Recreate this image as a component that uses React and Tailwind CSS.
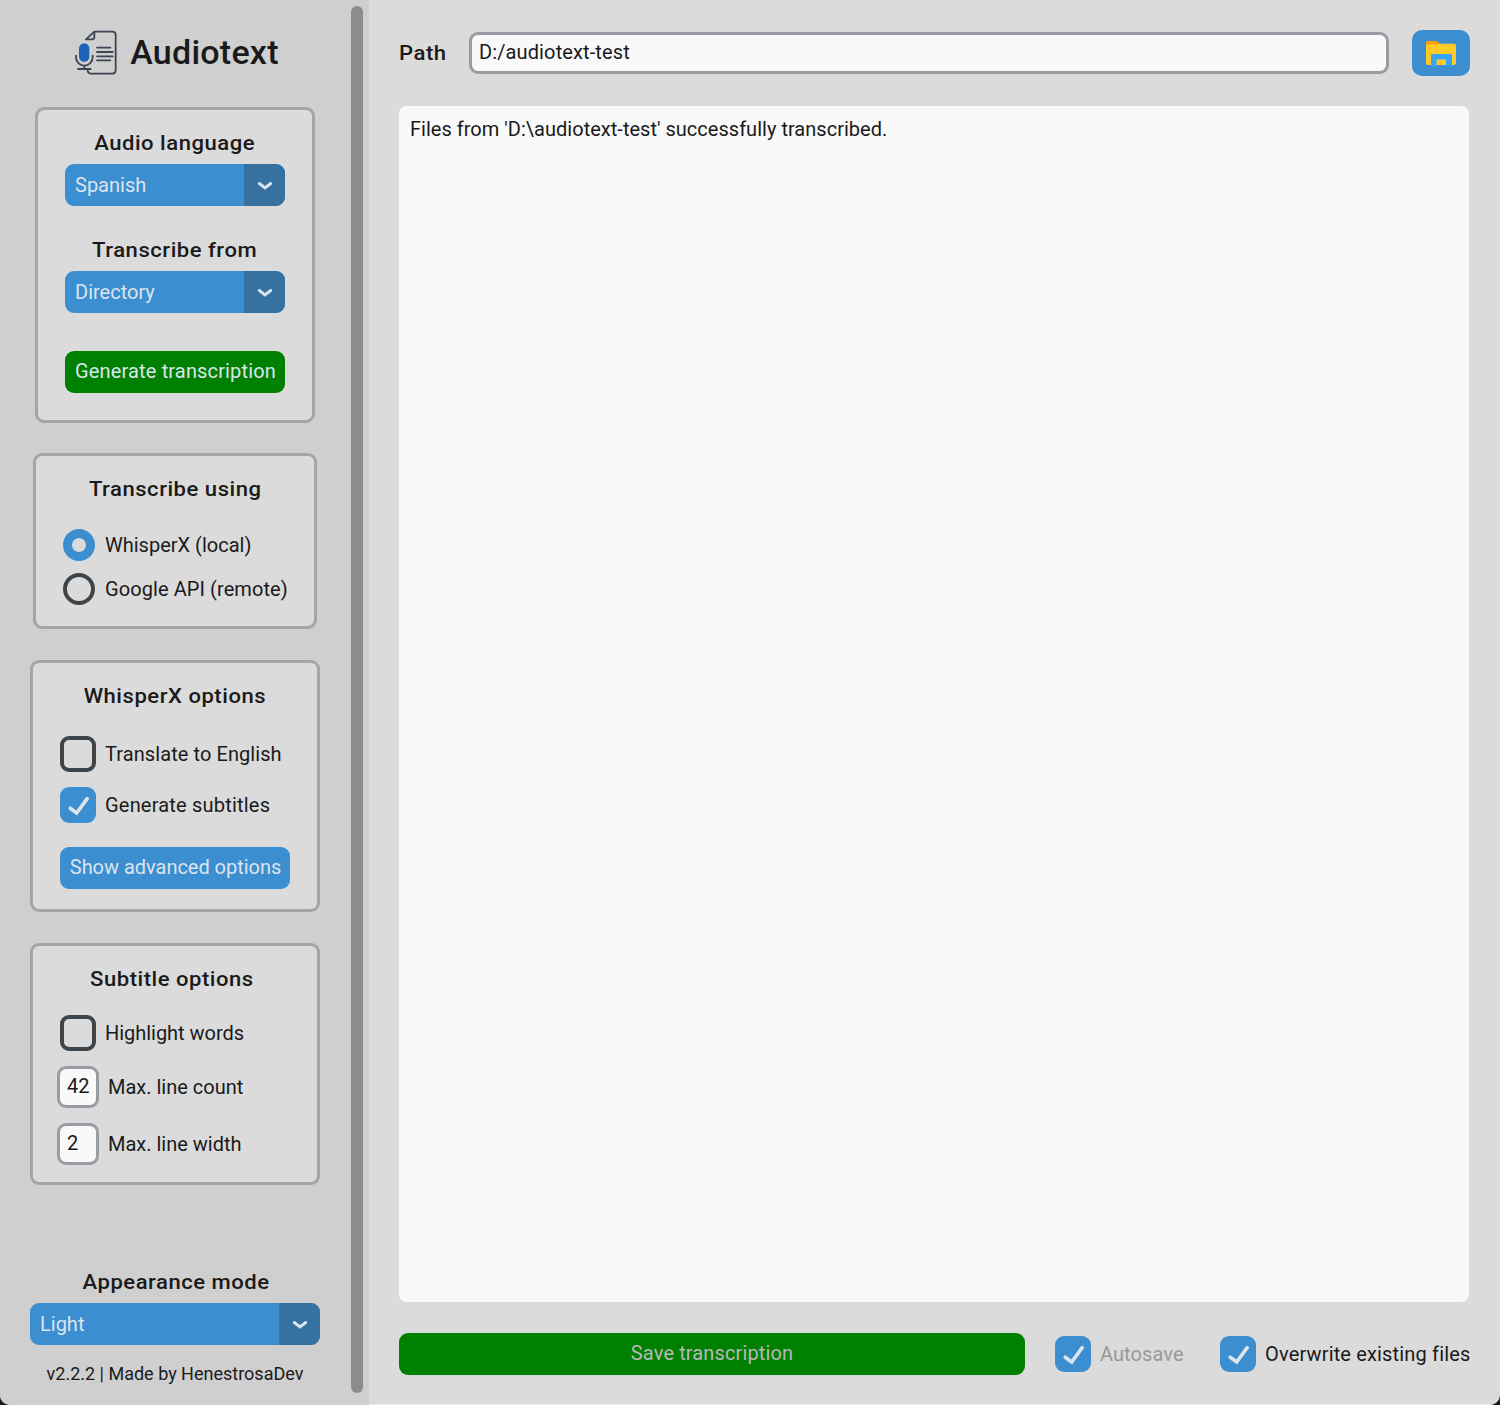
import React from "react";

function Title({ children, className = "" }) {
  return (
    <div className={`flex items-center justify-center whitespace-nowrap text-[21px] font-medium tracking-[0.5px] ${className}`}>
      <span className="inline-block scale-x-[1.05]">{children}</span>
    </div>
  );
}

function Check() {
  return (
    <svg width="36" height="36" viewBox="0 0 36 36" fill="none">
      <path d="M10.2 21.2 L16.7 26 L27.2 11.6" stroke="#dce4ee" strokeWidth="3.6" strokeLinecap="round" strokeLinejoin="miter" />
    </svg>
  );
}

function CheckBox({ checked }) {
  return checked ? (
    <div className="size-9 shrink-0 rounded-[9px] bg-[#3b8ed0]"><Check /></div>
  ) : (
    <div className="size-9 shrink-0 rounded-[9px] border-4 border-[#3e454a]" />
  );
}

function CheckRow({ checked, children, className = "" }) {
  return (
    <div className={`flex items-center gap-[9px] whitespace-nowrap ${className}`}>
      <CheckBox checked={checked} />
      <span>{children}</span>
    </div>
  );
}

function Select({ children }) {
  return (
    <div className="flex h-[42px] w-full overflow-hidden rounded-[9px] bg-[#3b8ed0] text-[#dce4ee]">
      <div className="flex flex-1 items-center pl-[10px]">{children}</div>
      <div className="flex w-[41px] items-center justify-center bg-[#36719f]">
        <svg width="16" height="10" viewBox="0 0 16 10" fill="none" className="mt-px">
          <path d="M2.300 2.500 L8 6.900 L13.700 2.500" stroke="#dce4ee" strokeWidth="3" strokeLinecap="round" strokeLinejoin="miter" />
        </svg>
      </div>
    </div>
  );
}

function Card({ children, className = "" }) {
  return <section className={`rounded-[9px] border-[3px] border-[#a5a5a5] bg-[#dbdbdb] ${className}`}>{children}</section>;
}

function NumberRow({ value, children, className = "" }) {
  return (
    <div className={`flex items-center gap-[9px] whitespace-nowrap ${className}`}>
      <div className="flex h-[42px] w-[42px] items-center rounded-[9px] border-[3px] border-[#979da2] bg-[#f9f9fa] pb-[2px] pl-[7px]">{value}</div>
      <span>{children}</span>
    </div>
  );
}

function Logo() {
  return (
    <svg width="42" height="45" viewBox="45 46 126 135" fill="none" stroke="#3f4556" strokeWidth="5.5" strokeLinecap="round" strokeLinejoin="round">
      <path d="M83 168 Q84 177 93 177 H157 Q167 177 167 167 V61 Q167 51 157 51 H103 L78 74 H96 Q103 74 103 67 V51" />
      <rect x="57" y="86" width="31" height="55" rx="15.5" fill="#1b63b5" stroke="none" />
      <path d="M48 123 V128 A24.500 24.500 0 0 0 98 128 V123 M73 153 V163 M54 163 H92" />
      <path d="M111 99 H151 M111 112 H158 M111 125 H158 M111 137 H151" strokeWidth="5.5" />
    </svg>
  );
}

function FolderIcon() {
  return (
    <svg width="30" height="26" viewBox="0 0 30 26">
      <path d="M0 8 V1.500 Q0 0 1.500 0 H10 Q11 0 11.700 0.800 L13.500 3 V8 Z" fill="#ffa000" />
      <path d="M0 5 Q0 3.500 1.500 3.500 H9.500 Q10.500 3.500 11.500 3 L12.500 2.800 H28.500 Q30 2.800 30 4.300 V22 Q30 24 28 24 H2 Q0 24 0 22 Z" fill="#ffca28" />
      <path d="M5 14 Q5 13 6 13 H25 Q26 13 26 14 V25.500 H20 V18.500 H10.500 V25.500 H5 Z" fill="#38a5f9" />
    </svg>
  );
}

export default function App() {
  return (
    <div className="h-[1405px] w-[1500px] bg-[#1c1c1c] font-[Roboto,sans-serif] text-[20px] leading-6 text-[#1a1a1a]">
      <div className="flex h-full w-full overflow-hidden rounded-b-[10px] bg-[#dbdbdb]">
        <aside className="flex w-[369px] shrink-0 bg-[#cfcfcf]">
          <div className="flex w-[350px] flex-col items-center">
            <header className="mt-[29px] flex h-[46px] items-center gap-[13px] pl-[4px]">
              <Logo />
              <h1 className="whitespace-nowrap text-[34px] font-medium leading-[44px] tracking-[0.25px]">Audiotext</h1>
            </header>

            <Card className="mt-[32px] h-[316px] w-[280px] px-[27px] pt-[12px]">
              <Title className="h-[42px]">Audio language</Title>
              <Select>Spanish</Select>
              <Title className="mt-[23px] h-[42px]">Transcribe from</Title>
              <Select>Directory</Select>
              <button className="mt-[38px] flex h-[42px] w-full items-center justify-center whitespace-nowrap rounded-[9px] bg-[#008000] pb-[2px] pl-px tracking-[0.15px] text-[#dce4ee]">
                Generate transcription
              </button>
            </Card>

            <Card className="mt-[30px] h-[176px] w-[284px] px-[27px] pt-[12px]">
              <Title className="h-[42px] pl-px">Transcribe using</Title>
              <div className="mt-[19px] flex h-8 items-center gap-[10px] whitespace-nowrap">
                <div className="size-8 shrink-0 rounded-full border-[9px] border-[#3b8ed0]" />
                <span>WhisperX (local)</span>
              </div>
              <div className="mt-3 flex h-8 items-center gap-[10px] whitespace-nowrap tracking-[0.08px]">
                <div className="size-8 shrink-0 rounded-full border-4 border-[#3e454a]" />
                <span>Google API (remote)</span>
              </div>
            </Card>

            <Card className="mt-[31px] h-[252px] w-[290px] px-[27px] pt-[12px]">
              <Title className="h-[42px]">WhisperX options</Title>
              <CheckRow className="mt-[19px] tracking-[0.08px]">Translate to English</CheckRow>
              <CheckRow checked className="mt-[15px] tracking-[0.2px]">Generate subtitles</CheckRow>
              <button className="mt-6 flex h-[42px] w-full items-center justify-center whitespace-nowrap rounded-[9px] bg-[#3b8ed0] pb-[2px] pl-px tracking-[-0.03px] text-[#dce4ee]">
                Show advanced options
              </button>
            </Card>

            <Card className="mt-[31px] h-[242px] w-[290px] pl-[24px] pr-[30px] pt-[12px]">
              <Title className="h-[42px]">Subtitle options</Title>
              <CheckRow className="ml-[3px] mt-[15px] tracking-[-0.03px]">Highlight words</CheckRow>
              <NumberRow value="42" className="mt-[15px]">Max. line count</NumberRow>
              <NumberRow value="2" className="mt-[15px]">Max. line width</NumberRow>
            </Card>

            <div className="mt-[76px] w-[290px]">
              <Title className="h-[42px] pl-[2px]">Appearance mode</Title>
              <Select>Light</Select>
            </div>
            <footer className="mt-[17px] whitespace-nowrap text-[18px]">v2.2.2 | Made by HenestrosaDev</footer>
          </div>
          <div className="ml-px mt-[6px] h-[1387px] w-3 rounded-full bg-[#8c8c8c]" />
        </aside>

        <main className="flex flex-1 flex-col border-b border-[#ebebeb] pl-[30px] pr-[30px] pt-[30px]">
          <div className="flex h-[46px] items-center">
            <label className="w-[70px] text-[21px] font-medium tracking-[0.5px]">
              <span className="inline-block origin-left scale-x-[1.05]">Path</span>
            </label>
            <div className="flex h-[42px] w-[920px] items-center rounded-[9px] border-[3px] border-[#979da2] bg-[#f9f9fa] pb-[2px] pl-[7px] tracking-[0.12px]">
              D:/audiotext-test
            </div>
            <button className="ml-[23px] flex h-[46px] w-[58px] items-center justify-center rounded-[10px] bg-[#3b8ed0] pt-[2px]">
              <FolderIcon />
            </button>
          </div>

          <div className="mt-[30px] h-[1196px] w-[1070px] rounded-[8px] bg-[#f9f9fa] pl-[11px] pt-[11px] tracking-[0.02px]">
            Files from 'D:\audiotext-test' successfully transcribed.
          </div>

          <div className="mt-[31px] flex h-[42px] items-center">
            <button className="flex h-[42px] w-[626px] items-center justify-center rounded-[9px] bg-[#008000] pb-[2px] tracking-[0.12px] text-[#b8b8b8]">
              Save transcription
            </button>
            <CheckRow checked className="ml-[30px] w-[165px] tracking-[0.08px] text-[#999999]">Autosave</CheckRow>
            <CheckRow checked className="tracking-[0.16px]">Overwrite existing files</CheckRow>
          </div>
        </main>
      </div>
    </div>
  );
}
